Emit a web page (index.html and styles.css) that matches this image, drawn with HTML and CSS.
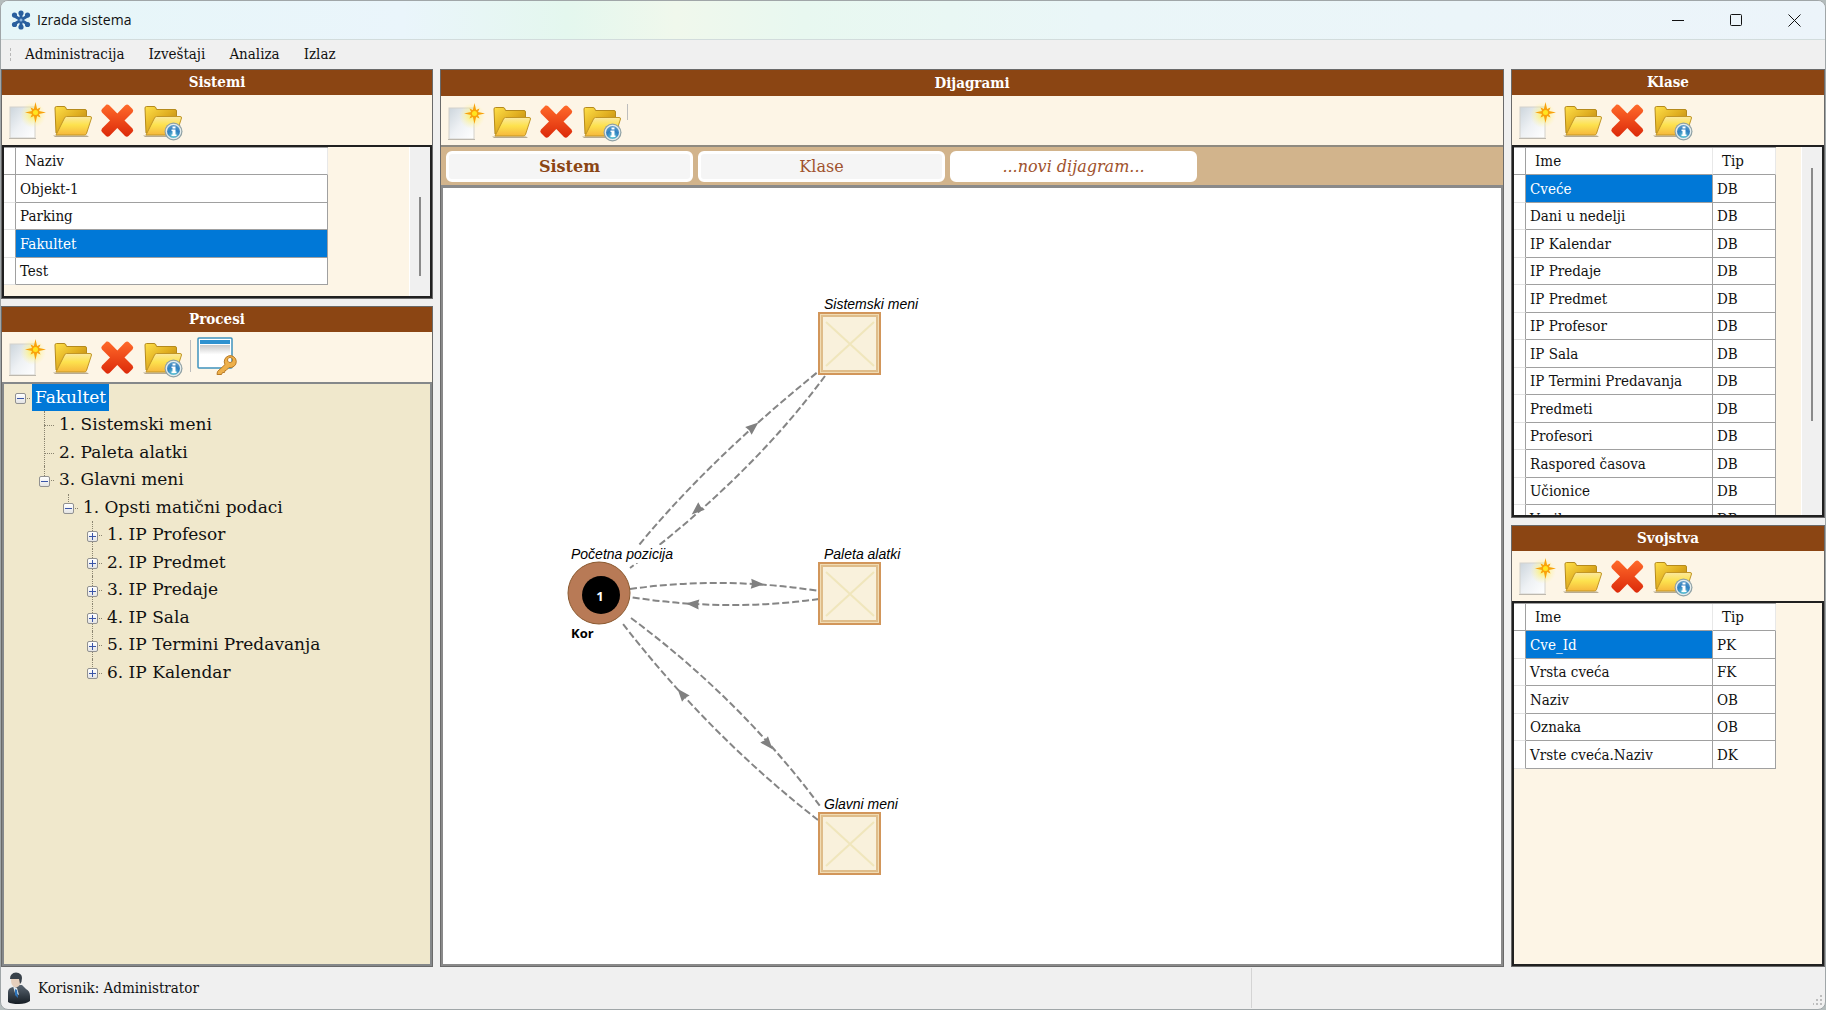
FILE: index.html
```html
<!DOCTYPE html>
<html lang="sr-Latn">
<head>
<meta charset="utf-8">
<title>Izrada sistema</title>
<link rel="stylesheet" href="styles.css">
</head>
<body>
<svg class="defs" aria-hidden="true">
  <defs>
    <linearGradient id="gDoc" x1="0" y1="0" x2="1" y2="1"><stop offset="0" stop-color="#ccd5dc"/><stop offset=".5" stop-color="#eef1f4"/><stop offset="1" stop-color="#fff"/></linearGradient>
    <radialGradient id="gGlow"><stop offset="0" stop-color="#fff04a" stop-opacity=".9"/><stop offset="1" stop-color="#fff39a" stop-opacity="0"/></radialGradient>
    <linearGradient id="gBack" x1="0" y1="0" x2="1" y2="1"><stop offset="0" stop-color="#ffe04a"/><stop offset=".5" stop-color="#e0ae20"/><stop offset="1" stop-color="#a87810"/></linearGradient>
    <linearGradient id="gFront" x1="0" y1="0" x2="0" y2="1"><stop offset="0" stop-color="#fbe9a0"/><stop offset=".45" stop-color="#fde24e"/><stop offset="1" stop-color="#f6b73c"/></linearGradient>
    <linearGradient id="gCross" x1="0" y1="0" x2="0" y2="1"><stop offset="0" stop-color="#ff6a2a"/><stop offset="1" stop-color="#dc2a0a"/></linearGradient>
    <radialGradient id="gInfo" cx=".5" cy=".85" r=".8"><stop offset="0" stop-color="#6fd0d8"/><stop offset=".6" stop-color="#2f7fc0"/><stop offset="1" stop-color="#5a9ac8"/></radialGradient>
    <linearGradient id="gWin" x1="0" y1="0" x2="0" y2="1"><stop offset="0" stop-color="#c9c9c9"/><stop offset=".6" stop-color="#fff"/></linearGradient>
    <linearGradient id="gSuit" x1="0" y1="0" x2="0" y2="1"><stop offset="0" stop-color="#5a6672"/><stop offset="1" stop-color="#161d24"/></linearGradient>
    <symbol id="new" viewBox="0 0 45 50">
      <rect x="5" y="12" width="25" height="31" fill="url(#gDoc)" stroke="#d4d2cc"/>
      <path d="M4 43.500H31" stroke="#bdb8ae"/>
      <circle cx="28" cy="20" r="13" fill="url(#gGlow)"/>
      <path d="M30.500 7l1.600 7 3.400-1.500-1.500 3.400 7 1.600-7 1.600 1.500 3.400-3.400-1.500-1.600 7-1.600-7-3.400 1.500 1.500-3.400-7-1.600 7-1.600-1.500-3.400 3.400 1.500z" fill="#f9a20c"/>
      <circle cx="30.500" cy="17.500" r="2.500" fill="#ffe51f"/>
    </symbol>
    <symbol id="folder" viewBox="0 0 45 50">
      <path d="M3 40.500H37l2 1.500H5z" fill="#8a7a5a" opacity=".6"/>
      <path d="M5 13q0-1.500 1.500-1.500H14q1.500 0 2 1.500l.5 1.500H35q1.500 0 1.500 1.500V38H6z" fill="url(#gBack)" stroke="#b58a1c"/>
      <path d="M6 40L14.500 23q.7-1.500 2-1.500h23.500q1.800 0 1.500 1.500L36.500 38.500q-.5 1.500-2 1.500z" fill="url(#gFront)" stroke="#c29626"/>
    </symbol>
    <symbol id="delete" viewBox="0 0 45 50">
      <path d="M11.500 9.500Q13 9 14.500 10.500L22.300 18.500 30 10.500Q32 9 33.500 10L37.500 14Q39 15.500 37.500 17.500L29.500 25.500 37.500 33.500Q39 35.500 37.500 37L33.500 41Q32 42.300 30 41L22.300 33 14.500 41Q12.500 42.300 11 41L7 37Q5.500 35.500 7 33.500L15 25.500 7 17.500Q5.500 15.500 7 14Z" fill="url(#gCross)"/>
    </symbol>
    <symbol id="info" viewBox="0 0 45 50">
      <use href="#folder" width="45" height="50"/>
      <circle cx="33.500" cy="36.500" r="9" fill="#8fa0a4"/>
      <circle cx="33.500" cy="36.500" r="7.800" fill="#e4ecec"/>
      <circle cx="33.500" cy="36.500" r="6.500" fill="url(#gInfo)"/>
      <path d="M32.500 31.500h3v2h-3zM31.500 34.500h4v5h1v1.500h-5v-1.500h1v-3.500h-1z" fill="#fff"/>
    </symbol>
    <symbol id="winkey" viewBox="0 0 45 50">
      <rect x="5" y="6" width="34" height="30" rx="1" fill="#fff" stroke="#3f93bd" stroke-width="1.500"/>
      <rect x="7" y="8" width="30" height="4" fill="#2f92d0"/>
      <rect x="7" y="13" width="30" height="16" fill="url(#gWin)"/>
      <path fill-rule="evenodd" d="M24 42.500L24.500 39.500 32 32.500A6 6 0 1 1 36 35.500L33 38.500 32 38.500 31.500 40.500 29.500 40.500 28.500 42.500ZM37 25.500a2.500 2.500 0 1 0 .1 0z" fill="#eeb04a" stroke="#b87a26"/>
    </symbol>
    <symbol id="arrow" viewBox="-8 -8 16 16" overflow="visible"><path d="M7 0L-6-5-5 0-6 5z" fill="#808080"/></symbol>
  </defs>
</svg>

<div class="window">
  <header class="titlebar">
    <svg class="app-icon" viewBox="0 0 20 20" width="20" height="20" aria-hidden="true">
      <g stroke="#2a5f9e" stroke-width="3" stroke-linecap="round"><path d="M10 2.500v15M3.500 6l13 8M16.500 6l-13 8"/></g>
      <g fill="#2a5f9e"><circle cx="10" cy="3" r="2.600"/><circle cx="10" cy="17" r="2.600"/><circle cx="3.500" cy="5" r="2.600"/><circle cx="16.500" cy="5" r="2.600"/><circle cx="3.500" cy="14.500" r="2.600"/><circle cx="16.500" cy="14.500" r="2.600"/></g>
      <circle cx="10" cy="10" r="1.500" fill="#8db4dc"/>
    </svg>
    <h1 class="app-title">Izrada sistema</h1>
    <button class="win-btn" aria-label="Umanji"><svg width="13" height="13"><path d="M0 6.500h12"/></svg></button>
    <button class="win-btn" aria-label="Uvećaj"><svg width="13" height="13"><rect x=".5" y=".5" width="11" height="11" rx="1"/></svg></button>
    <button class="win-btn" aria-label="Zatvori"><svg width="13" height="13"><path d="M.5.5l12 12M12.500.5l-12 12"/></svg></button>
  </header>

  <nav class="menubar">
    <span class="grip"></span>
    <button>Administracija</button>
    <button>Izveštaji</button>
    <button>Analiza</button>
    <button>Izlaz</button>
  </nav>

  <main class="workspace">
    <div class="column column-left">
      <section class="panel panel-systems">
        <h2 class="panel-title">Sistemi</h2>
        <div class="toolbar">
          <button aria-label="Novi"><svg><use href="#new"/></svg></button>
          <button aria-label="Otvori"><svg><use href="#folder"/></svg></button>
          <button aria-label="Obriši"><svg><use href="#delete"/></svg></button>
          <button aria-label="Informacije"><svg><use href="#info"/></svg></button>
        </div>
        <div class="grid-box">
          <table class="data">
            <colgroup><col class="c-mark"><col class="c-wide"></colgroup>
            <thead><tr><td></td><th>Naziv</th></tr></thead>
            <tbody>
              <tr><td></td><td>Objekt-1</td></tr>
              <tr><td></td><td>Parking</td></tr>
              <tr><td></td><td class="selected">Fakultet</td></tr>
              <tr><td></td><td>Test</td></tr>
            </tbody>
          </table>
          <div class="scroll"><span class="thumb thumb-systems"></span></div>
        </div>
      </section>

      <section class="panel panel-processes">
        <h2 class="panel-title">Procesi</h2>
        <div class="toolbar">
          <button aria-label="Novi"><svg><use href="#new"/></svg></button>
          <button aria-label="Otvori"><svg><use href="#folder"/></svg></button>
          <button aria-label="Obriši"><svg><use href="#delete"/></svg></button>
          <button aria-label="Informacije"><svg><use href="#info"/></svg></button>
          <span class="sep"></span>
          <button aria-label="Prava pristupa"><svg><use href="#winkey"/></svg></button>
        </div>
        <ul class="tree" role="tree">
          <li class="root" role="treeitem" aria-level="1"><span class="twig"><button class="fold open" aria-label="Skupi"></button></span><span class="label selected">Fakultet</span></li>
          <li class="l1" role="treeitem" aria-level="2"><span class="twig"></span><span class="label">1. Sistemski meni</span></li>
          <li class="l1" role="treeitem" aria-level="2"><span class="twig"></span><span class="label">2. Paleta alatki</span></li>
          <li class="l1 last" role="treeitem" aria-level="2"><span class="twig"><button class="fold open" aria-label="Skupi"></button></span><span class="label">3. Glavni meni</span></li>
          <li class="l2 last" role="treeitem" aria-level="3"><span class="twig"><button class="fold open" aria-label="Skupi"></button></span><span class="label">1. Opsti matični podaci</span></li>
          <li class="l3" role="treeitem" aria-level="4"><span class="twig"><button class="fold" aria-label="Proširi"></button></span><span class="label">1. IP Profesor</span></li>
          <li class="l3" role="treeitem" aria-level="4"><span class="twig"><button class="fold" aria-label="Proširi"></button></span><span class="label">2. IP Predmet</span></li>
          <li class="l3" role="treeitem" aria-level="4"><span class="twig"><button class="fold" aria-label="Proširi"></button></span><span class="label">3. IP Predaje</span></li>
          <li class="l3" role="treeitem" aria-level="4"><span class="twig"><button class="fold" aria-label="Proširi"></button></span><span class="label">4. IP Sala</span></li>
          <li class="l3" role="treeitem" aria-level="4"><span class="twig"><button class="fold" aria-label="Proširi"></button></span><span class="label">5. IP Termini Predavanja</span></li>
          <li class="l3 last" role="treeitem" aria-level="4"><span class="twig"><button class="fold" aria-label="Proširi"></button></span><span class="label">6. IP Kalendar</span></li>
        </ul>
      </section>
    </div>

    <section class="panel panel-diagrams">
      <h2 class="panel-title">Dijagrami</h2>
      <div class="toolbar">
        <button aria-label="Novi"><svg><use href="#new"/></svg></button>
        <button aria-label="Otvori"><svg><use href="#folder"/></svg></button>
        <button aria-label="Obriši"><svg><use href="#delete"/></svg></button>
        <button aria-label="Informacije"><svg><use href="#info"/></svg></button>
        <span class="sep sep-short"></span>
      </div>
      <div class="tabs">
        <button class="tab active">Sistem</button>
        <button class="tab">Klase</button>
        <button class="tab tab-new">...novi dijagram...</button>
      </div>
      <div class="canvas">
        <svg class="diagram" role="img" aria-label="Dijagram sistema">
          <g transform="translate(-443 -188)">
            <g class="edges">
              <path d="M627 560Q699 468 819 371"/>
              <path d="M825 376Q751 476 630 568"/>
              <path d="M630 589Q723 576 819 591"/>
              <path d="M819 599Q725 612 630 597"/>
              <path d="M631 618Q741 700 820 806"/>
              <path d="M818 820Q710 736 623 624"/>
            </g>
            <g>
              <use href="#arrow" x="-8" y="-8" width="16" height="16" transform="translate(753 427) rotate(-40)"/>
              <use href="#arrow" x="-8" y="-8" width="16" height="16" transform="translate(697 510) rotate(139)"/>
              <use href="#arrow" x="-8" y="-8" width="16" height="16" transform="translate(757 584) rotate(3)"/>
              <use href="#arrow" x="-8" y="-8" width="16" height="16" transform="translate(693 604) rotate(184)"/>
              <use href="#arrow" x="-8" y="-8" width="16" height="16" transform="translate(768 744) rotate(50)"/>
              <use href="#arrow" x="-8" y="-8" width="16" height="16" transform="translate(682 694) rotate(230)"/>
            </g>
            <rect x="571" y="545" width="104" height="18" fill="#fff"/>
            <circle class="start" cx="599" cy="593" r="31"/>
            <circle cx="601" cy="595" r="19"/>
            <text class="num" x="600" y="601" text-anchor="middle">1</text>
            <text class="name" x="571" y="559">Početna pozicija</text>
            <text class="user" x="571" y="638">Kor</text>
            <g class="node"><rect class="outer" x="819" y="313" width="61" height="61"/><rect class="inner" x="822" y="316" width="55" height="55"/><path d="M826 322l48 44M874 322l-48 44"/></g>
            <text class="name" x="824" y="309">Sistemski meni</text>
            <g class="node"><rect class="outer" x="819" y="563" width="61" height="61"/><rect class="inner" x="822" y="566" width="55" height="55"/><path d="M826 572l48 44M874 572l-48 44"/></g>
            <text class="name" x="824" y="559">Paleta alatki</text>
            <g class="node"><rect class="outer" x="819" y="813" width="61" height="61"/><rect class="inner" x="822" y="816" width="55" height="55"/><path d="M826 822l48 44M874 822l-48 44"/></g>
            <text class="name" x="824" y="809">Glavni meni</text>
          </g>
        </svg>
      </div>
    </section>

    <div class="column column-right">
      <section class="panel panel-classes">
        <h2 class="panel-title">Klase</h2>
        <div class="toolbar">
          <button aria-label="Novi"><svg><use href="#new"/></svg></button>
          <button aria-label="Otvori"><svg><use href="#folder"/></svg></button>
          <button aria-label="Obriši"><svg><use href="#delete"/></svg></button>
          <button aria-label="Informacije"><svg><use href="#info"/></svg></button>
        </div>
        <div class="grid-box">
          <table class="data">
            <colgroup><col class="c-mark"><col class="c-name"><col class="c-type"></colgroup>
            <thead><tr><td></td><th>Ime</th><th>Tip</th></tr></thead>
            <tbody>
              <tr><td></td><td class="selected">Cveće</td><td>DB</td></tr>
              <tr><td></td><td>Dani u nedelji</td><td>DB</td></tr>
              <tr><td></td><td>IP Kalendar</td><td>DB</td></tr>
              <tr><td></td><td>IP Predaje</td><td>DB</td></tr>
              <tr><td></td><td>IP Predmet</td><td>DB</td></tr>
              <tr><td></td><td>IP Profesor</td><td>DB</td></tr>
              <tr><td></td><td>IP Sala</td><td>DB</td></tr>
              <tr><td></td><td>IP Termini Predavanja</td><td>DB</td></tr>
              <tr><td></td><td>Predmeti</td><td>DB</td></tr>
              <tr><td></td><td>Profesori</td><td>DB</td></tr>
              <tr><td></td><td>Raspored časova</td><td>DB</td></tr>
              <tr><td></td><td>Učionice</td><td>DB</td></tr>
              <tr><td></td><td>Vozila</td><td>DB</td></tr>
            </tbody>
          </table>
          <div class="scroll"><span class="thumb thumb-classes"></span></div>
        </div>
      </section>

      <section class="panel panel-properties">
        <h2 class="panel-title">Svojstva</h2>
        <div class="toolbar">
          <button aria-label="Novi"><svg><use href="#new"/></svg></button>
          <button aria-label="Otvori"><svg><use href="#folder"/></svg></button>
          <button aria-label="Obriši"><svg><use href="#delete"/></svg></button>
          <button aria-label="Informacije"><svg><use href="#info"/></svg></button>
        </div>
        <div class="grid-box">
          <table class="data">
            <colgroup><col class="c-mark"><col class="c-name"><col class="c-type"></colgroup>
            <thead><tr><td></td><th>Ime</th><th>Tip</th></tr></thead>
            <tbody>
              <tr><td></td><td class="selected">Cve_Id</td><td>PK</td></tr>
              <tr><td></td><td>Vrsta cveća</td><td>FK</td></tr>
              <tr><td></td><td>Naziv</td><td>OB</td></tr>
              <tr><td></td><td>Oznaka</td><td>OB</td></tr>
              <tr><td></td><td>Vrste cveća.Naziv</td><td>DK</td></tr>
            </tbody>
          </table>
        </div>
      </section>
    </div>
  </main>

  <footer class="statusbar">
    <svg class="avatar" viewBox="0 0 24 32" width="24" height="32" aria-hidden="true">
      <path d="M1 30V20q0-4 5-5l4-2h5l4 4q4 2 4 7v5q-4 3-11 3-8 0-11-2z" fill="url(#gSuit)"/>
      <path d="M6 14l4 2 2 7-4-2z" fill="#dfe8ee"/><path d="M8 17l2 1 1 8-3-3z" fill="#2b72b8"/>
      <path d="M4 8q0 7 5 7.500Q14 14 14 8l-1-3H5z" fill="#e6cfbc"/>
      <path d="M3 7q0-6 6-6.500Q15 1 15 6q0 4-2 6l-1-5q-5 0-9 0z" fill="#38414a"/>
    </svg>
    <span class="user-name">Korisnik: Administrator</span>
    <span class="status-cell">
      <svg class="resize" width="10" height="10" fill="#bdbdbd" aria-hidden="true"><path d="M7 0h2v2H7zM7 4h2v2H7zM3 4h2v2H3zM7 8h2v2H7zM3 8h2v2H3zM0 8h1v2H0z"/></svg>
    </span>
  </footer>
</div>
</body>
</html>
```
FILE: styles.css
```css
:root {
  --serif: "DejaVu Serif Condensed", "DejaVu Serif", serif;
  --serif-wide: "DejaVu Serif", serif;
  --brown: #8b4513;
  --cream: #fdf5e6;
  --blue: #0078d7;
  --line: #a0a0a0;
}

* { box-sizing: border-box; }

body {
  margin: 0;
  background: #b4bcbc;
  color: #111;
  font: condensed 15px/20px var(--serif);
}

button {
  margin: 0;
  padding: 0;
  border: 0;
  background: none;
  color: inherit;
  font: inherit;
}

h1, h2 { margin: 0; }

.defs { position: absolute; width: 0; height: 0; }

.window {
  display: flex;
  flex-direction: column;
  height: 100vh;
  overflow: hidden;
  border: 1px solid #a0a6a8;
  border-radius: 8px;
  background: #f0f0f0;
}

/* Title bar */
.titlebar {
  display: flex;
  align-items: center;
  flex: none;
  height: 39px;
  padding: 0 2px 0 10px;
  border-bottom: 1px solid #d2dcdc;
  background: linear-gradient(90deg, #e6f6f8, #eaf5fb 22%, #e4f7ee 31%, #f0f8ec 37%, #e8f8f0 44%, #eaf6f8 60%, #ecf4fa);
}

.app-title {
  flex: 1;
  margin-left: 6px;
  font: 14px/20px "Open Sans", sans-serif;
}

.win-btn {
  display: grid;
  place-items: center;
  width: 58px;
  height: 38px;
}

.win-btn svg { fill: none; stroke: #111; }

/* Menu bar */
.menubar {
  display: flex;
  align-items: center;
  flex: none;
  height: 29px;
  padding-bottom: 2px;
}

.menubar button { padding: 0 12px; }

.grip {
  width: 3px;
  height: 14px;
  margin: 0 1px 0 8px;
  background: radial-gradient(#b8b8b8 1px, transparent 1px) 0 0 / 3px 5px;
}

/* Panels */
.workspace {
  display: grid;
  grid-template-columns: 432px minmax(0, 1fr) 314px;
  gap: 7px;
  flex: 1;
  min-height: 0;
}

.column {
  display: flex;
  flex-direction: column;
  gap: 7px;
  min-height: 0;
}

.panel {
  display: flex;
  flex-direction: column;
  min-height: 0;
  border: 1px solid #6a6a6a;
  background: var(--cream);
}

.panel-systems { flex: 0 0 230px; }
.panel-classes { flex: 0 0 449px; }
.panel-processes, .panel-properties { flex: 1; }

.panel-title {
  flex: none;
  height: 25px;
  background: var(--brown);
  color: #fff;
  font: bold condensed 15px/25px var(--serif);
  text-align: center;
}

.toolbar {
  display: flex;
  flex: none;
  height: 50px;
  padding-left: 3px;
}

.toolbar button { width: 45px; height: 50px; }
.toolbar svg { display: block; width: 45px; height: 50px; }

.sep {
  width: 1px;
  height: 32px;
  margin: 8px 2px 0 5px;
  background: #bdbdbd;
}

.sep-short { height: 16px; margin-left: 3px; }

/* Tables */
.grid-box {
  display: flex;
  justify-content: space-between;
  align-items: flex-start;
  flex: 1;
  min-height: 0;
  overflow: hidden;
  border: 2px solid #202020;
}

.data {
  table-layout: fixed;
  border-spacing: 0;
  background: #fff;
  border-top: 1px solid var(--line);
}

.c-mark { width: 12px; }
.c-wide { width: 312px; }
.c-name { width: 187px; }
.c-type { width: 63px; }

.data tr { height: 27px; }
.data tbody tr:nth-child(odd) { height: 28px; }

.data td, .data th {
  padding: 0 4px;
  border-right: 1px solid var(--line);
  border-bottom: 1px solid var(--line);
  font-weight: normal;
  line-height: 20px;
  text-align: left;
  white-space: nowrap;
}

.data th { padding-left: 9px; border-right-color: #e8e8e8; }
.data tbody td:first-child { border-bottom-color: #e2e2e2; }
.data .selected { background: var(--blue); color: #fff; }

.scroll {
  flex: none;
  align-self: stretch;
  width: 21px;
  border-left: 1px solid #fff;
  background: #f0f0f0;
}

.thumb {
  display: block;
  width: 2px;
  margin-left: 9px;
  background: #8a8a8a;
}

.thumb-systems { height: 79px; margin-top: 50px; }
.thumb-classes { height: 253px; margin-top: 21px; }

/* Process tree */
.tree {
  flex: 1;
  min-height: 0;
  margin: 0;
  padding: 0 0 0 4px;
  border: 2px solid #85888a;
  background: #f0e8cc;
  list-style: none;
  font: 17px/27px var(--serif-wide);
}

.tree li { display: flex; height: 27px; }
.tree li:nth-child(even) { height: 28px; }
.l1 { margin-left: 24px; }
.l2 { margin-left: 48px; }
.l3 { margin-left: 72px; }

.label { padding: 0 3px; white-space: nowrap; }
.label.selected { background: var(--blue); color: #fff; }

.twig {
  position: relative;
  display: grid;
  place-items: center;
  width: 24px;
}

.twig::before {
  content: "";
  position: absolute;
  inset: 0 auto 0 12px;
  border-left: 1px dotted #8a8470;
}

.last .twig::before { bottom: 50%; }
.root .twig::before { display: none; }

.twig::after {
  content: "";
  position: absolute;
  top: 14px;
  left: 12px;
  right: 2px;
  border-top: 1px dotted #8a8470;
}

.fold {
  position: relative;
  z-index: 1;
  width: 11px;
  height: 11px;
  margin: 2px 0 0;
  border: 1px solid #919191;
  border-radius: 2px;
  background:
    linear-gradient(#3a55a8, #3a55a8) 50% 50% / 7px 1px no-repeat,
    linear-gradient(#3a55a8, #3a55a8) 50% 50% / 1px 7px no-repeat,
    linear-gradient(#fff, #e4e4e4);
}

.fold.open {
  background:
    linear-gradient(#3a55a8, #3a55a8) 50% 50% / 7px 1px no-repeat,
    linear-gradient(#fff, #e4e4e4);
}

/* Diagrams */
.panel-diagrams .panel-title { height: 26px; line-height: 27px; }
.panel-diagrams .toolbar { height: 49px; }

.tabs {
  display: flex;
  flex: none;
  gap: 5px;
  height: 40px;
  padding: 4px 5px 3px;
  border-top: 2px solid #8f8a80;
  background: #d2b48c;
}

.tab {
  width: 247px;
  border: 3px solid #fff;
  border-radius: 6px;
  background: #f5f5f5;
  color: #a0522d;
  font: 16px/20px var(--serif-wide);
}

.tab.active { font-weight: bold; color: var(--brown); }
.tab-new { background: #fff; font-style: italic; }

.canvas {
  flex: 1;
  min-height: 0;
  border: 2px solid #8a8a8a;
  border-top-width: 3px;
  background: #fff;
}

.diagram { display: block; width: 100%; height: 100%; }

.edges { fill: none; stroke: #858585; stroke-width: 2; stroke-dasharray: 7 3; }
.start { fill: #b87a56; stroke: #8b5a30; }
.name { font: italic 14px "Liberation Sans", sans-serif; }
.user { font: bold 13px "Open Sans", sans-serif; }
.num { fill: #fff; font: bold 13px "Open Sans", sans-serif; }
.node .outer { fill: #f0dcb4; stroke: #d2965a; stroke-width: 2; }
.node .inner { fill: #f9f1dc; stroke: #dfbd8a; stroke-width: 2; }
.node path { fill: none; stroke: #f0e6bc; stroke-width: 2; }

/* Status bar */
.statusbar {
  display: flex;
  align-items: center;
  flex: none;
  height: 42px;
  padding-left: 6px;
}

.user-name { flex: 1; margin-left: 7px; }

.status-cell {
  display: flex;
  justify-content: flex-end;
  align-items: flex-end;
  width: 574px;
  height: 40px;
  padding: 0 2px 3px 0;
  border-left: 1px solid #d4d4d4;
}
```
